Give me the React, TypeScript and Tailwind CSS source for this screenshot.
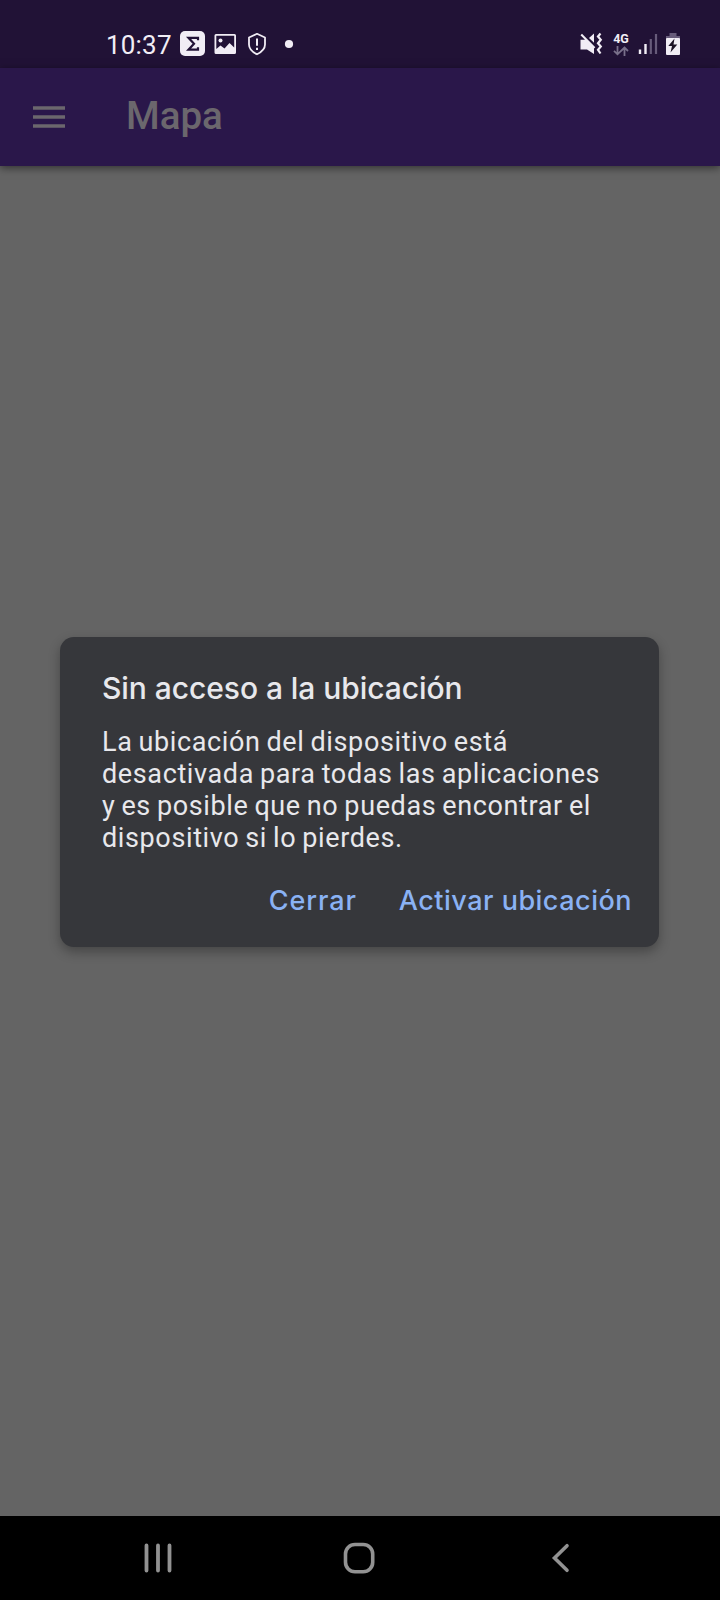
import React from "react";

const ICON = "#f1edf5";

function StatusBar() {
  return (
    <div className="flex h-[68px] shrink-0 items-start bg-[#211236] pl-[106px] pt-[28px] text-[#f1edf5]">
      <span className="mt-[1px] w-[74px] whitespace-nowrap text-[26px] leading-[32px] tracking-[0.2px]">10:37</span>
      <svg className="h-8 w-[120px]" viewBox="180 28 120 32" fill="none">
        <rect x="180" y="31" width="25" height="25" rx="5" fill={ICON} />
        <path d="M198 40.200V37.800H188.500L194 43.700L188.500 49.700H198V47.300" stroke="#211236" strokeWidth="2.200" />
        <path fillRule="evenodd" d="M216 34H234.500Q236 34 236 35.500V52.500Q236 54 234.500 54H216Q214.500 54 214.500 52.500V35.500Q214.500 34 216 34ZM216.300 35.800V49L220.500 45.500L224.500 48.500L229.500 43L234.200 47.500V35.800Z" fill={ICON} />
        <circle cx="220.500" cy="40.500" r="2" fill={ICON} />
        <path d="M257 33.800L265 37.500V44.500C265 48.500 262 51.800 257 54.300C252 51.800 249 48.500 249 44.500V37.500Z" stroke={ICON} strokeWidth="1.800" strokeLinejoin="round" />
        <path d="M257 38.500V45.800M257 47.800V50" stroke={ICON} strokeWidth="2" />
        <circle cx="289" cy="44" r="4.100" fill={ICON} />
      </svg>
      <svg className="ml-[280px] h-8 w-6" viewBox="580 28 24 32" fill="none">
        <path d="M580.500 35.300L582 33.800L595.300 47.300L594 48.600V54L587 49.500H580.500V39.800H585Z" fill={ICON} />
        <path d="M589 38L594 33.500V42.800Z" fill={ICON} />
        <path d="M600.500 33.500L598 36.500L600.800 39.800L598 43.200L600.800 46.500L598 49.800L600.500 53.500" stroke={ICON} strokeWidth="2.200" />
      </svg>
      <div className="ml-[8px] flex w-[18px] flex-col items-center pt-[4px]">
        <span className="whitespace-nowrap text-[12.500px] font-bold leading-[13px]">4G</span>
        <svg className="mt-[1px] h-[10px] w-4" viewBox="0 0 16 10" fill="none" stroke="#79708a" strokeWidth="1.800">
          <path d="M4.500 0V8M1 4.800L4.500 8.300L8 4.800M11.500 10V1.500M8 5L11.500 1.500L15 5" />
        </svg>
      </div>
      <svg className="ml-[8px] h-8 w-[44px]" viewBox="638 28 44 32" fill="none">
        <path d="M640 54V49.500M645.500 54V44" stroke={ICON} strokeWidth="2.400" />
        <path d="M650.800 54V39M656 54V34" stroke="#675b7a" strokeWidth="2.200" />
        <path d="M669.500 33H676.500V36H680V39H666V36H669.500Z" fill="#675b7a" />
        <rect x="666" y="38" width="14" height="17" rx="1" fill={ICON} />
        <path d="M674.500 38.500L668.300 46H672L670.500 52.500L677.300 44.500H673.500Z" fill="#1b1225" />
      </svg>
    </div>
  );
}

function AppBar() {
  return (
    <header className="z-10 flex h-[98px] shrink-0 items-center bg-[#2a174a] pl-[33px] text-[#6b676d] shadow-[0_2px_8px_rgba(0,0,0,0.5)]">
      <svg className="h-[22px] w-8" viewBox="0 0 32 22" fill="currentColor">
        <path d="M0 0.200H32V3.700H0ZM0 9.200H32V12.700H0ZM0 18.200H32V21.700H0Z" />
      </svg>
      <h1 className="-mt-[3px] ml-[61px] text-[38.500px] font-medium leading-[46px]">Mapa</h1>
    </header>
  );
}

function Dialog() {
  return (
    <section className="mt-[471px] h-[310px] w-[599px] rounded-[14px] bg-[#36373b] pl-[42px] pr-[27px] pt-[31px] text-[#e8e8ec] shadow-[0_5px_12px_rgba(0,0,0,0.3)]">
      <h2 className="h-[40px] whitespace-nowrap font-['Inter'] text-[30px] font-medium leading-[40px] tracking-[-0.06px]">Sin acceso a la ubicación</h2>
      <p className="mt-[18px] whitespace-nowrap text-[27px] leading-[32px] tracking-[0.620px] [word-spacing:-1.3px]">
        La ubicación del dispositivo está
        <br />
        desactivada para todas las aplicaciones
        <br />
        y es posible que no puedas encontrar el
        <br />
        dispositivo si lo pierdes.
      </p>
      <div className="mt-[31px] flex justify-end gap-[42px] whitespace-nowrap font-['Inter'] text-[27px] font-medium leading-[32px] text-[#8ab2f4]">
        <button className="tracking-[0.900px]">Cerrar</button>
        <button className="tracking-[0.500px]">Activar ubicación</button>
      </div>
    </section>
  );
}

function NavBar() {
  return (
    <nav className="flex h-[84px] shrink-0 items-start bg-black pl-[142px] pt-[24px]">
      <svg className="h-9 w-8" viewBox="142 1540 32 36" stroke="#929292" strokeWidth="3.800" strokeLinecap="round">
        <path d="M146.500 1545.500V1570.500M158 1545.500V1570.500M169.500 1545.500V1570.500" />
      </svg>
      <svg className="ml-[166px] h-9 w-9" viewBox="340 1540 36 36" fill="none" stroke="#929292" strokeWidth="3.600">
        <rect x="345.500" y="1544.500" width="27.200" height="27.200" rx="9.500" />
      </svg>
      <svg className="ml-[172px] h-9 w-6" viewBox="548 1540 24 36" fill="none" stroke="#929292" strokeWidth="3.600" strokeLinecap="round">
        <path d="M567 1545.700L554.500 1558L567 1570.300" />
      </svg>
    </nav>
  );
}

export default function App() {
  return (
    <div className="flex h-[1600px] w-[720px] flex-col overflow-hidden bg-[#646464] font-['Roboto',sans-serif]">
      <StatusBar />
      <AppBar />
      <main className="flex flex-1 flex-col pl-[60px]">
        <Dialog />
      </main>
      <NavBar />
    </div>
  );
}
